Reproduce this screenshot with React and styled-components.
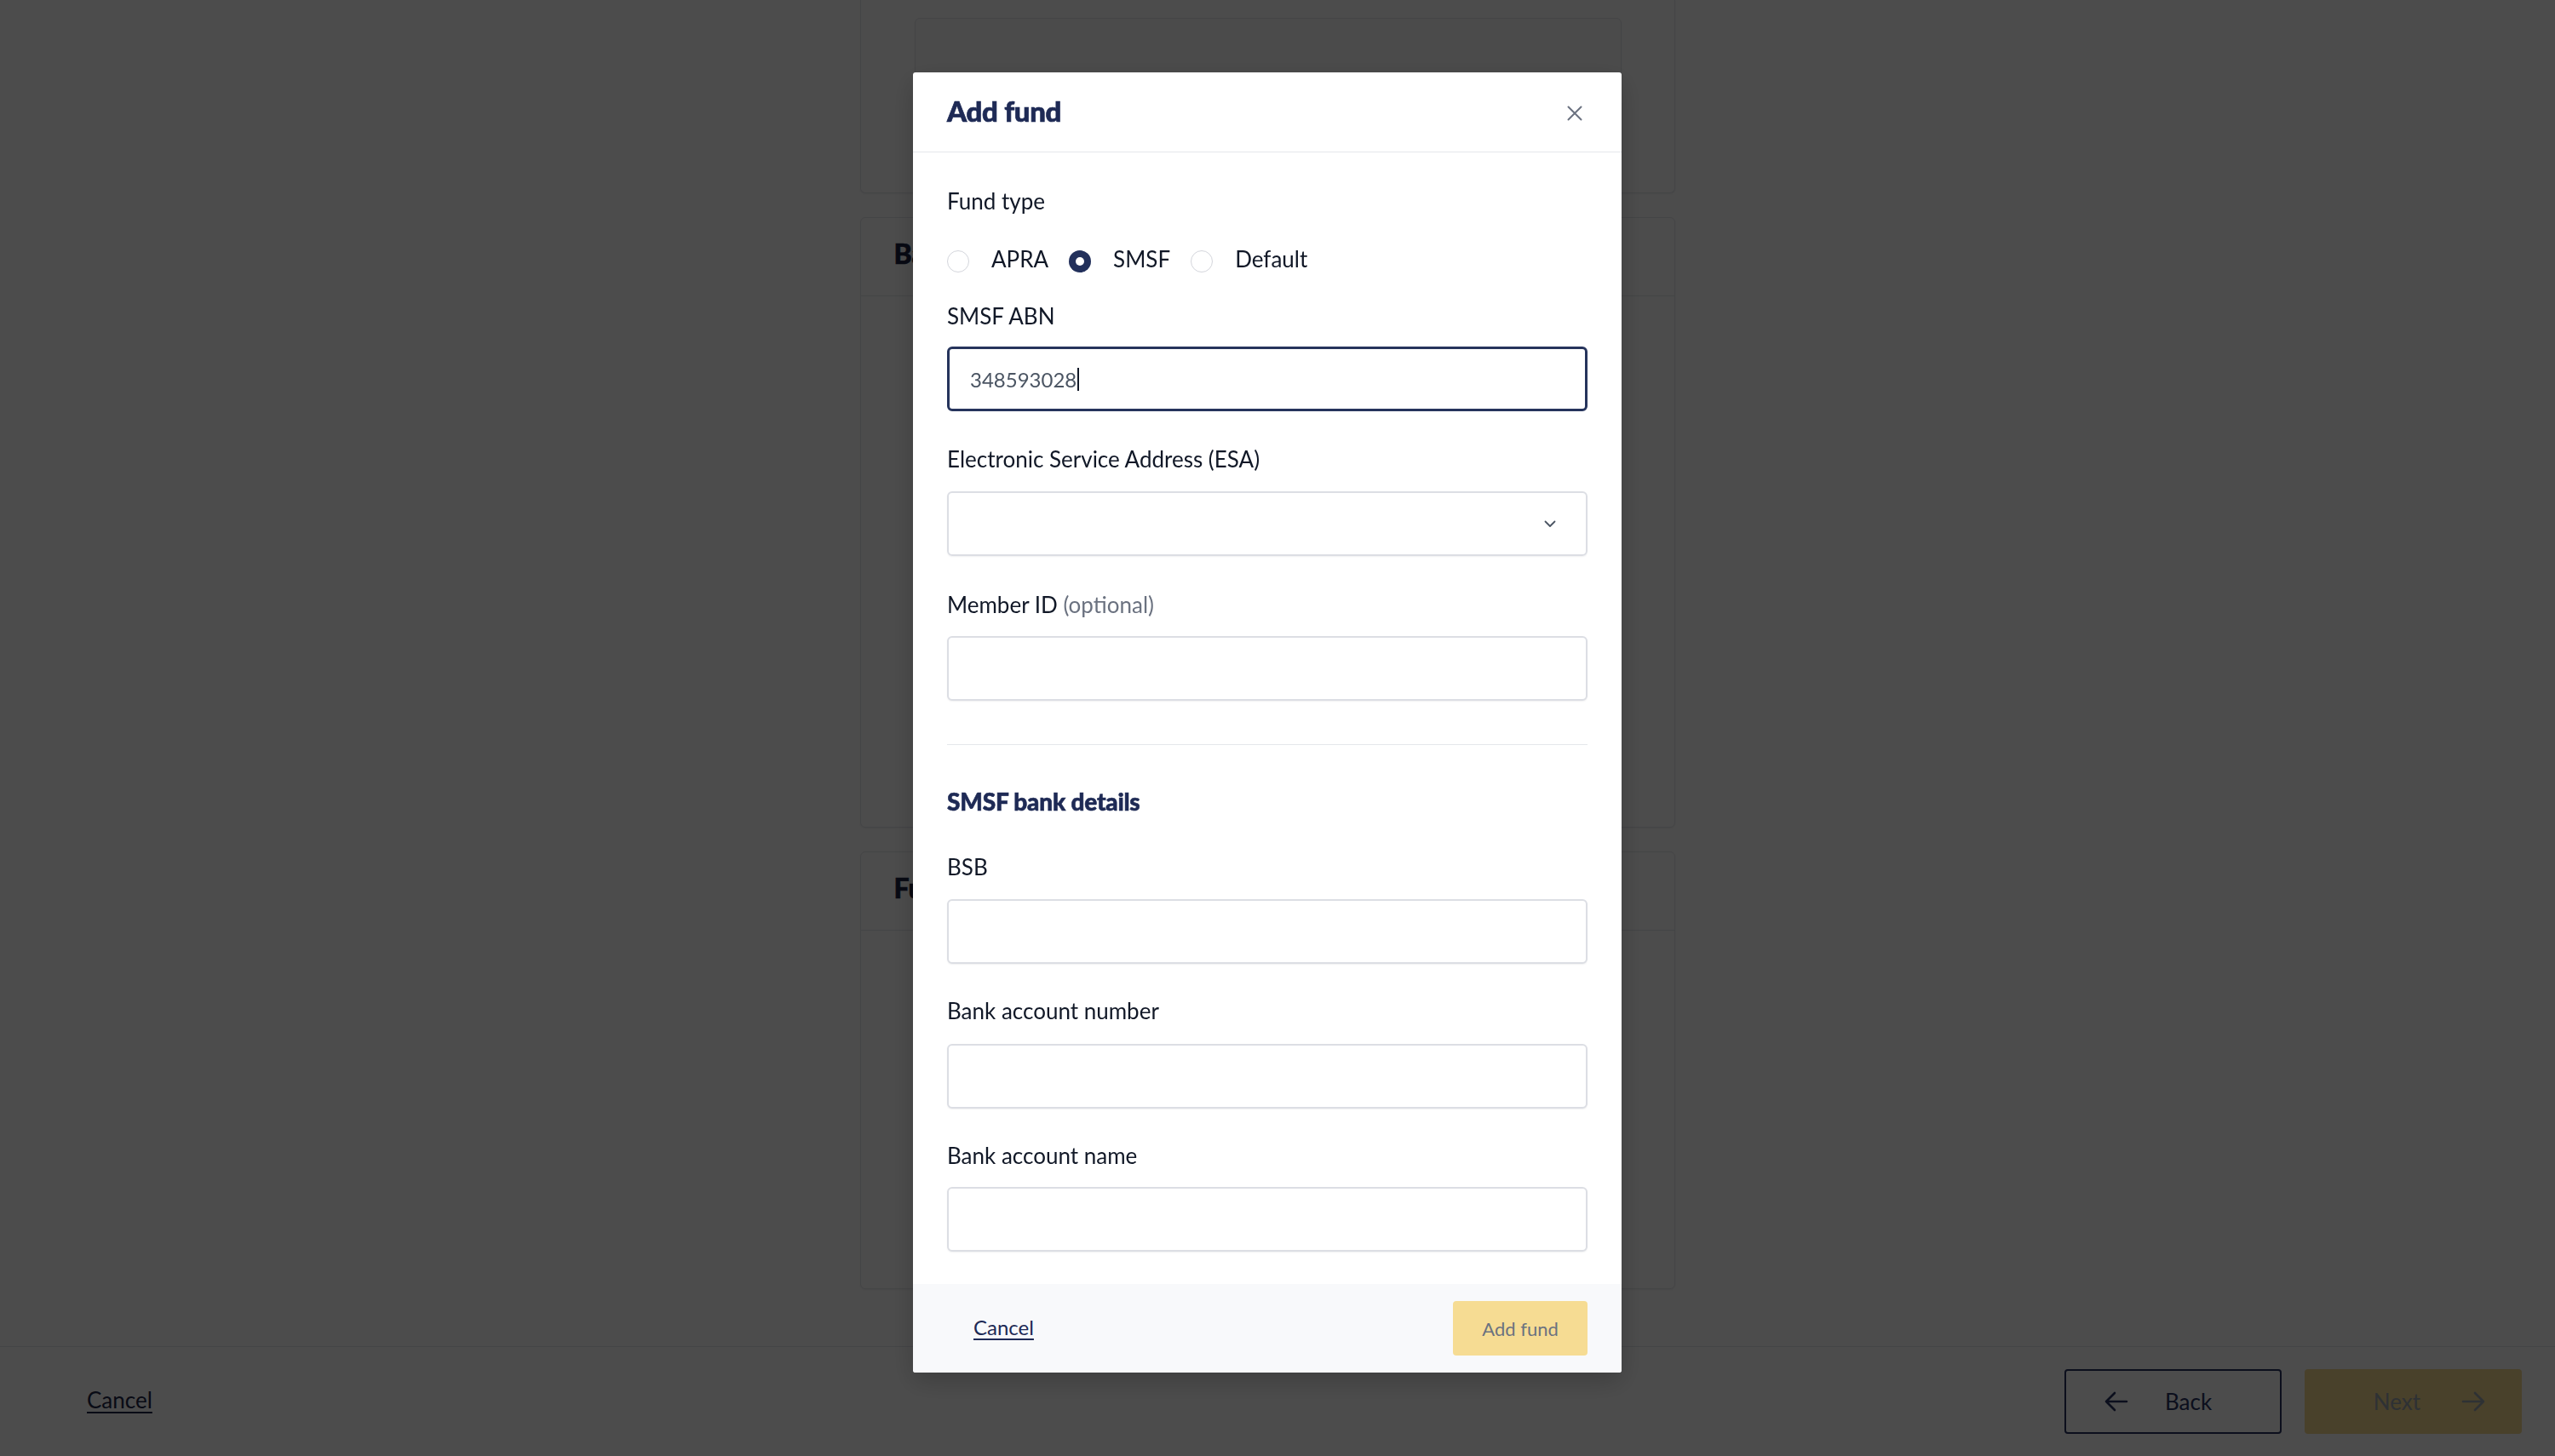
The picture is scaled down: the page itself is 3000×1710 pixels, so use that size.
import React from 'react';
import styled, { createGlobalStyle } from 'styled-components';

const GlobalStyle = createGlobalStyle`
  html, body { margin: 0; padding: 0; }
  body {
    width: 3000px;
    height: 1710px;
    overflow: hidden;
    background: #ffffff;
    font-family: Lato, "Noto Sans", sans-serif;
    color: #111827;
  }
  * { box-sizing: border-box; }
`;

const Page = styled.div`
  height: 1710px;
  display: flex;
  flex-direction: column;
  background: #ffffff;
`;

const Main = styled.main`
  flex: 1;
  overflow: hidden;
  padding-right: 24px;
  display: flex;
  flex-direction: column;
  align-items: center;
  gap: 28px;
`;

const Card = styled.section`
  width: 957px;
  height: ${(p) => p.$h}px;
  flex-shrink: 0;
  background: #ffffff;
  border: 1px solid #e4e6eb;
  border-top: ${(p) => (p.$clipped ? 'none' : '1px solid #e4e6eb')};
  border-radius: ${(p) => (p.$clipped ? '0 0 6px 6px' : '6px')};
  box-shadow: 0 1px 3px rgba(0, 0, 0, 0.06);
  padding: ${(p) => (p.$clipped ? '21px 63px 0 63px' : '0')};
`;

const InnerPanel = styled.div`
  width: 830px;
  height: 170px;
  border: 1px solid #e4e6eb;
  border-radius: 6px;
  background: #fbfbfc;
  box-shadow: 0 1px 3px rgba(0, 0, 0, 0.05);
`;

const CardHeader = styled.div`
  height: 92px;
  border-bottom: 1px solid #e4e6eb;
  display: flex;
  align-items: center;
  padding: 0 39px 8px;
`;

const CardTitle = styled.h2`
  margin: 0;
  font-size: 32px;
  line-height: 40px;
  font-weight: 900;
  -webkit-text-stroke: 0.6px currentColor;
  color: #1a2140;
`;

const Footer = styled.footer`
  height: 129px;
  flex-shrink: 0;
  border-top: 1px solid #e4e6eb;
  display: flex;
  align-items: center;
  justify-content: space-between;
  padding: 0 39px 0 102px;
`;

const PageLink = styled.a`
  font-size: 26px;
  line-height: 36px;
  color: #1e2747;
  text-decoration: underline;
  text-underline-offset: 4px;
  text-decoration-thickness: 2px;
  margin-bottom: 4px;
  cursor: pointer;
`;

const FooterActions = styled.div`
  display: flex;
  gap: 27px;
`;

const NavButton = styled.button`
  width: 255px;
  height: 76px;
  display: flex;
  align-items: center;
  justify-content: ${(p) => (p.$primary ? 'flex-end' : 'flex-start')};
  gap: ${(p) => (p.$primary ? '48px' : '43px')};
  padding: ${(p) => (p.$primary ? '0 43px 0 0' : '0 0 0 45px')};
  border-radius: 4px;
  font-family: inherit;
  font-size: 26px;
  border: ${(p) => (p.$primary ? 'none' : '2px solid #283261')};
  background: ${(p) => (p.$primary ? '#f3d98f' : '#ffffff')};
  color: ${(p) => (p.$primary ? '#9ca3af' : '#283261')};
`;

const Overlay = styled.div`
  position: fixed;
  inset: 0;
  background: rgba(0, 0, 0, 0.7);
  display: flex;
  justify-content: center;
  align-items: flex-start;
  padding: 85px 24px 0 0;
`;

const Modal = styled.div`
  width: 832px;
  background: #ffffff;
  border-radius: 3px;
  box-shadow: 0 10px 30px rgba(0, 0, 0, 0.2);
  display: flex;
  flex-direction: column;
  overflow: hidden;
`;

const ModalHeader = styled.header`
  height: 94px;
  border-bottom: 1px solid #e5e7eb;
  display: flex;
  align-items: center;
  justify-content: space-between;
  padding: 0 40px 4px;
`;

const ModalTitle = styled.h1`
  margin: 0;
  font-size: 33px;
  line-height: 40px;
  font-weight: 900;
  letter-spacing: -0.3px;
  -webkit-text-stroke: 0.7px currentColor;
  color: #1e2a55;
`;

const CloseButton = styled.button`
  width: 30px;
  height: 30px;
  margin-top: 6px;
  padding: 0;
  border: none;
  background: transparent;
  display: flex;
  align-items: center;
  justify-content: center;
  color: #6b7280;
`;

const ModalBody = styled.div`
  padding: 39px 40px 38px;
  display: flex;
  flex-direction: column;
`;

const FieldGroup = styled.div`
  display: flex;
  flex-direction: column;
  gap: ${(p) => p.$gap ?? 20}px;
  margin-top: ${(p) => p.$mt ?? 0}px;
`;

const Label = styled.label`
  font-size: 26px;
  line-height: 36px;
  color: #111827;
`;

const Optional = styled.span`
  color: #6b7280;
`;

const RadioRow = styled.div`
  display: flex;
  align-items: center;
  height: 36px;
`;

const RadioOption = styled.label`
  display: flex;
  align-items: center;
  gap: 26px;
  margin-right: 24px;
  font-size: 26px;
  line-height: 36px;
  color: #111827;
`;

const RadioCircle = styled.span`
  width: 26px;
  height: 26px;
  margin-top: 6px;
  border-radius: 50%;
  flex-shrink: 0;
  display: flex;
  align-items: center;
  justify-content: center;
  border: ${(p) => (p.$checked ? 'none' : '1.5px solid #d4d6dc')};
  background: ${(p) => (p.$checked ? '#22305b' : '#ffffff')};

  &::after {
    content: '';
    display: ${(p) => (p.$checked ? 'block' : 'none')};
    width: 10px;
    height: 10px;
    border-radius: 50%;
    background: #ffffff;
  }
`;

const TextInput = styled.input`
  display: block;
  width: 100%;
  height: 76px;
  border: 2px solid #dcdee4;
  border-radius: 6px;
  background: #ffffff;
  box-shadow: 0 1px 2px rgba(16, 24, 40, 0.06);
  font-family: inherit;
  font-size: 24px;
  padding: 0 22px;
  outline: none;
`;

const FocusedBox = styled.div`
  height: 76px;
  border: 3px solid #26345c;
  border-radius: 6px;
  display: flex;
  align-items: center;
  padding: 0 24px;
  font-size: 24px;
  color: #4b5563;
`;

const Caret = styled.span`
  display: inline-block;
  width: 1.5px;
  height: 27px;
  margin-left: 1px;
  background: #111827;
`;

const SelectBox = styled.div`
  height: 76px;
  border: 2px solid #dcdee4;
  border-radius: 6px;
  box-shadow: 0 1px 2px rgba(16, 24, 40, 0.06);
  display: flex;
  align-items: center;
  justify-content: flex-end;
  padding: 0 35px 0 22px;
  color: #4b5563;
`;

const Divider = styled.hr`
  margin: 51px 0 0;
  border: none;
  border-top: 1px solid #e5e7eb;
`;

const SectionTitle = styled.h3`
  margin: 48px 0 0;
  font-size: 28px;
  line-height: 36px;
  font-weight: 900;
  letter-spacing: -0.2px;
  -webkit-text-stroke: 0.6px currentColor;
  color: #1e2a55;
`;

const ModalFooter = styled.footer`
  height: 104px;
  background: #f8f9fb;
  display: flex;
  align-items: center;
  justify-content: space-between;
  padding: 0 40px;
`;

const CancelLink = styled.a`
  padding-left: 31px;
  margin-bottom: 2px;
  font-size: 24px;
  line-height: 34px;
  color: #1e2a55;
  text-decoration: underline;
  text-underline-offset: 4px;
  text-decoration-thickness: 2px;
  cursor: pointer;
`;

const SubmitButton = styled.button`
  width: 158px;
  height: 64px;
  border: none;
  border-radius: 4px;
  background: #f6dc93;
  color: #6b7280;
  font-family: inherit;
  font-size: 22px;
`;

const CloseIcon = () => (
  <svg width="18" height="18" viewBox="0 0 18 18" fill="none">
    <path d="M1.5 1.5L16.5 16.5M16.5 1.5L1.5 16.5" stroke="currentColor" strokeWidth="2" strokeLinecap="round" />
  </svg>
);

const ChevronIcon = () => (
  <svg width="14" height="9" viewBox="0 0 14 9" fill="none">
    <path d="M1.5 1.5L7 7L12.5 1.5" stroke="currentColor" strokeWidth="1.8" strokeLinecap="round" strokeLinejoin="round" />
  </svg>
);

const ArrowLeft = () => (
  <svg width="28" height="24" viewBox="0 0 28 24" fill="none">
    <path d="M26 12H2M12 2L2 12L12 22" stroke="currentColor" strokeWidth="2.6" strokeLinecap="round" strokeLinejoin="round" />
  </svg>
);

const ArrowRight = () => (
  <svg width="28" height="24" viewBox="0 0 28 24" fill="none">
    <path d="M2 12H26M16 2L26 12L16 22" stroke="currentColor" strokeWidth="2.6" strokeLinecap="round" strokeLinejoin="round" />
  </svg>
);

const radioOptions = [
  { label: 'APRA', checked: false },
  { label: 'SMSF', checked: true },
  { label: 'Default', checked: false },
];

export default function App() {
  return (
    <>
      <GlobalStyle />
      <Page>
        <Main>
          <Card $clipped $h={227}>
            <InnerPanel />
          </Card>
          <Card $h={717}>
            <CardHeader>
              <CardTitle>Bank details</CardTitle>
            </CardHeader>
          </Card>
          <Card $h={514}>
            <CardHeader>
              <CardTitle>Fund details</CardTitle>
            </CardHeader>
          </Card>
        </Main>
        <Footer>
          <PageLink>Cancel</PageLink>
          <FooterActions>
            <NavButton>
              <ArrowLeft />
              <span>Back</span>
            </NavButton>
            <NavButton $primary disabled>
              <span>Next</span>
              <ArrowRight />
            </NavButton>
          </FooterActions>
        </Footer>
      </Page>

      <Overlay>
        <Modal role="dialog" aria-label="Add fund">
          <ModalHeader>
            <ModalTitle>Add fund</ModalTitle>
            <CloseButton aria-label="Close">
              <CloseIcon />
            </CloseButton>
          </ModalHeader>
          <ModalBody>
            <FieldGroup $gap={32}>
              <Label>Fund type</Label>
              <RadioRow>
                {radioOptions.map((o) => (
                  <RadioOption key={o.label}>
                    <RadioCircle $checked={o.checked} />
                    {o.label}
                  </RadioOption>
                ))}
              </RadioRow>
            </FieldGroup>

            <FieldGroup $mt={31} $gap={18}>
              <Label>SMSF ABN</Label>
              <FocusedBox>
                348593028
                <Caret />
              </FocusedBox>
            </FieldGroup>

            <FieldGroup $mt={38} $gap={20}>
              <Label>Electronic Service Address (ESA)</Label>
              <SelectBox>
                <ChevronIcon />
              </SelectBox>
            </FieldGroup>

            <FieldGroup $mt={39} $gap={19}>
              <Label>
                Member ID <Optional>(optional)</Optional>
              </Label>
              <TextInput type="text" />
            </FieldGroup>

            <Divider />

            <SectionTitle>SMSF bank details</SectionTitle>

            <FieldGroup $mt={41} $gap={20}>
              <Label>BSB</Label>
              <TextInput type="text" />
            </FieldGroup>

            <FieldGroup $mt={37} $gap={21}>
              <Label>Bank account number</Label>
              <TextInput type="text" />
            </FieldGroup>

            <FieldGroup $mt={37} $gap={19}>
              <Label>Bank account name</Label>
              <TextInput type="text" />
            </FieldGroup>
          </ModalBody>
          <ModalFooter>
            <CancelLink>Cancel</CancelLink>
            <SubmitButton disabled>Add fund</SubmitButton>
          </ModalFooter>
        </Modal>
      </Overlay>
    </>
  );
}
